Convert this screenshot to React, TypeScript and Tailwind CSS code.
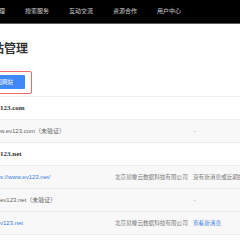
import React from 'react';

const navItems = ['网站管理', '搜索服务', '互动交流', '资源合作', '用户中心'];

type Row = {
  domain: string;
  head?: boolean;
  link?: boolean;
  company?: string;
  status?: string;
  statusLink?: boolean;
};

const rows: Row[] = [
  { domain: '123.com', head: true },
  { domain: 'w.ev123.com（未验证）', status: '–' },
  { domain: '123.net', head: true },
  { domain: 's://www.ev123.net/', link: true, company: '北京易橡云数据科技有限公司', status: '没有新消息或近期的消息' },
  { domain: 'ev123.net（未验证）', status: '–' },
  { domain: 'v123.net', link: true, company: '北京易橡云数据科技有限公司', status: '查看新消息', statusLink: true },
];

const App = () => {
  return (
    <div
      className="w-[240px] h-[240px] overflow-hidden bg-white"
      style={{ fontFamily: '"Liberation Sans", "Noto Sans CJK SC", sans-serif' }}
    >
      {/* Top nav */}
      <div className="h-[24px] bg-black border-b-[1.5px] border-[#5c5c5c] overflow-hidden">
        <div className="flex items-center h-full gap-[20px] ml-[-19px] text-[6px] text-[#cfcfcf] whitespace-nowrap">
          {navItems.map((item, index) => (
            <span key={index}>{item}</span>
          ))}
        </div>
      </div>

      {/* Title */}
      <h1 className="mt-[19px] ml-[-8px] text-[12px] leading-[12px] font-bold text-[#333] whitespace-nowrap">
        站管理
      </h1>

      {/* Add button with highlight */}
      <div className="mt-[16px] ml-[-30px] w-[62px] h-[23px] border-[1.5px] border-[#f06a6a] rounded-[2px] flex justify-end pr-[6px] pt-[3px]">
        <button className="w-[46px] h-[14px] bg-[#4088f6] rounded-[1px] text-white text-[5.5px] leading-[14px] text-center whitespace-nowrap">
          添加网站
        </button>
      </div>

      {/* Table */}
      <div className="mt-[2px] border-t border-[#ececec]">
        {rows.map((row, index) => (
          <div
            key={index}
            className={`h-[23px] border-b border-[#ececec] grid grid-cols-[115px_78px_1fr] items-center text-[6px] whitespace-nowrap ${
              row.head ? 'bg-white' : 'bg-[#f8f8f8]'
            }`}
          >
            <span
              className={
                row.head
                  ? 'text-[7px] font-bold text-[#333]'
                  : row.link
                  ? 'text-[#3b7de0]'
                  : 'text-[#666]'
              }
              style={row.head ? { fontFamily: '"Liberation Serif", serif' } : undefined}
            >
              {row.domain}
            </span>
            <span className="text-[#777] text-[5.6px] overflow-hidden">{row.company}</span>
            <span className={`overflow-hidden text-[5.6px] ${row.statusLink ? 'text-[#3b7de0]' : row.status === '–' ? 'text-[#bbb]' : 'text-[#777]'}`}>
              {row.status}
            </span>
          </div>
        ))}
      </div>
    </div>
  );
};

export default App;
